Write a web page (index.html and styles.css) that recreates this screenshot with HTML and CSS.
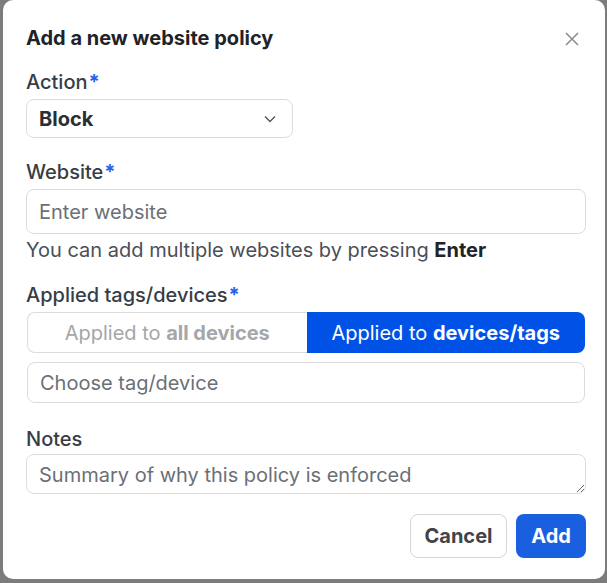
FILE: index.html
```html
<!DOCTYPE html>
<html>
<head>
<meta charset="utf-8">
<link rel="stylesheet" href="styles.css">
</head>
<body>
<div class="modal">
  <div class="header">
    <h2 class="title">Add a new website policy</h2>
    <svg class="close" width="14" height="14" viewBox="0 0 14 14"><path d="M1 1L13 13M13 1L1 13" stroke="#8f8f8f" stroke-width="1.6" fill="none"/></svg>
  </div>

  <div class="field">
    <label class="label">Action<span class="req">*</span></label>
    <div class="select">
      <span>Block</span>
      <svg width="12" height="8" viewBox="0 0 12 8"><path d="M1 1.5L6 6.5L11 1.5" stroke="#555" stroke-width="1.4" fill="none"/></svg>
    </div>
  </div>

  <div class="field">
    <label class="label">Website<span class="req">*</span></label>
    <div class="input tall"><span class="ph">Enter website</span></div>
    <div class="help">You can add multiple websites by pressing <b>Enter</b></div>
  </div>

  <div class="field applied">
    <label class="label">Applied tags/devices<span class="req">*</span></label>
    <div class="segment">
      <div class="seg off"><span>Applied to <b>all devices</b></span></div>
      <div class="seg on"><span>Applied to <b>devices/tags</b></span></div>
    </div>
    <div class="input choose"><span class="ph">Choose tag/device</span></div>
  </div>

  <div class="field notes">
    <label class="label">Notes</label>
    <textarea class="textarea" placeholder="Summary of why this policy is enforced"></textarea>
  </div>

  <div class="footer">
    <button class="btn cancel">Cancel</button>
    <button class="btn add">Add</button>
  </div>
</div>
</body>
</html>
```

FILE: styles.css
```css
* { box-sizing: border-box; }
html, body { margin: 0; padding: 0; }
body {
  width: 607px;
  height: 583px;
  background: #7c7c7c;
  font-family: Inter, "Noto Sans", sans-serif;
  overflow: hidden;
}
.modal {
  margin-left: 3px;
  width: 602px;
  height: 579px;
  background: #fff;
  border-radius: 10px;
  padding: 26px 19px 0 23px;
  display: flex;
  flex-direction: column;
}
.header {
  display: flex;
  justify-content: space-between;
  align-items: center;
  height: 24px;
}
.title {
  margin: 0;
  font-size: 20px;
  line-height: 24px;
  font-weight: 700;
  color: #1f2328;
}
.close { margin-right: 7px; margin-top: 2px; }
.field { display: flex; flex-direction: column; margin-top: 20px; }
.field + .field { margin-top: 22px; }
.label {
  font-size: 20px;
  line-height: 24px;
  font-weight: 500;
  color: #383c44;
  margin-bottom: 5px;
}
.req { color: #2563eb; font-weight: 700; margin-left: 1px; }
.select {
  width: 267px;
  height: 39px;
  border: 1px solid #dcdcdc;
  border-radius: 8px;
  display: flex;
  align-items: center;
  justify-content: space-between;
  padding: 0 16px 0 12px;
  font-size: 20px;
  font-weight: 700;
  color: #2a2e35;
}
.input {
  height: 45px;
  border: 1px solid #dcdcdc;
  border-radius: 8px;
  display: flex;
  align-items: center;
  padding: 0 12px;
  font-size: 20px;
}
.ph { color: #6b6f76; }
.help {
  font-size: 20px;
  line-height: 24px;
  color: #4a4f57;
  margin-top: 4px;
}
.help b { color: #1f2328; }
.field.applied { margin-top: 21px; }
.segment {
  display: flex;
  height: 41px;
  margin: 0 1px;
}
.seg {
  flex: 1;
  display: flex;
  align-items: center;
  justify-content: center;
  font-size: 20px;
}
.seg.off {
  border: 1px solid #dcdcdc;
  border-right: none;
  border-radius: 8px 0 0 8px;
  color: #a3a6ab;
}
.seg.on {
  background: #0052e6;
  color: #fff;
  border-radius: 0 8px 8px 0;
}
.input.choose {
  height: 41px;
  margin: 9px 1px 0;
  padding: 0 12px;
}
.field.notes { margin-top: 24px; }
.notes .label { margin-bottom: 3px; }
.textarea {
  height: 40px;
  border: 1px solid #dcdcdc;
  border-radius: 8px;
  font-family: Inter, "Noto Sans", sans-serif;
  font-size: 20px;
  padding: 8px 12px 0;
  resize: vertical;
  overflow-y: scroll;
  outline: none;
}
.textarea::placeholder { color: #6b6f76; }
.textarea::-webkit-scrollbar { width: 9px; }
.textarea::-webkit-scrollbar-track { background: #f4f4f4; border-radius: 0 8px 8px 0; }
.textarea::-webkit-scrollbar-thumb { background: #dcdcdc; border-radius: 4px; }
.footer {
  display: flex;
  justify-content: flex-end;
  gap: 9px;
  margin-top: 20px;
}
.btn {
  height: 44px;
  border-radius: 8px;
  font-family: Inter, "Noto Sans", sans-serif;
  font-size: 20px;
  font-weight: 700;
  padding: 0 12px;
}
.btn.cancel {
  width: 97px;
  background: #fff;
  border: 1px solid #d6d6d6;
  color: #3f434a;
}
.btn.add {
  width: 70px;
  background: #1a5fe0;
  border: none;
  color: #fff;
}
```
